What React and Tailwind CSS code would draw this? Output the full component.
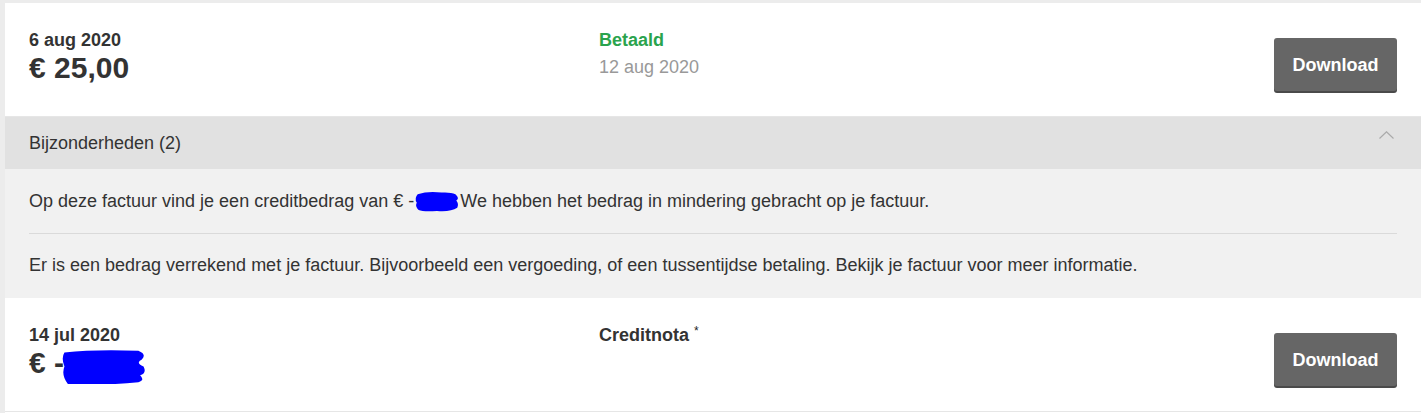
import React from "react";

const font = { fontFamily: '"Liberation Sans", Arial, sans-serif' };

function Scribble({ className, d }) {
  return (
    <svg className={className} viewBox="0 0 100 40" preserveAspectRatio="none">
      <path d={d} fill="#0000ff" />
    </svg>
  );
}

function DownloadButton() {
  return (
    <button className="mt-[8px] h-[53px] w-[123px] rounded-[3px] bg-[#666666] text-[18px] font-bold text-white shadow-[0_2px_0_#4a4a4a]">
      <span className="relative top-[1px]">Download</span>
    </button>
  );
}

function InvoiceRow({ date, amount, middle }) {
  return (
    <div className="grid grid-cols-[570px_1fr_auto] items-start border-b border-[#e6e6e6] bg-white px-6 pt-[27px] pb-[25px]">
      <div>
        <div className="text-[18px] leading-5 font-bold text-[#333]">{date}</div>
        <div className="mt-[3px] text-[30px] leading-[30px] font-bold text-[#333]">{amount}</div>
      </div>
      <div>{middle}</div>
      <DownloadButton />
    </div>
  );
}

export default function App() {
  return (
    <div className="min-h-[413px] bg-[#ececec] pl-[5px] pt-[3px]" style={font}>
      <div className="bg-white">
        <InvoiceRow
          date="6 aug 2020"
          amount="€ 25,00"
          middle={
            <div>
              <div className="text-[18px] leading-5 font-bold text-[#2aa34d]">Betaald</div>
              <div className="mt-[7px] text-[18px] leading-5 text-[#999]">12 aug 2020</div>
            </div>
          }
        />

        <div className="flex h-[52px] items-center justify-between bg-[#e1e1e1] px-6">
          <span className="text-[18px] text-[#333]">Bijzonderheden (2)</span>
          <svg className="mb-4 mr-[3px] h-[8px] w-[15px]" viewBox="0 0 15 8" fill="none">
            <path d="M0.5 7.5 L7.5 0.8 L14.5 7.5" stroke="#aaaaaa" strokeWidth="1.2" />
          </svg>
        </div>

        <div className="bg-[#f1f1f1] px-6">
          <div className="py-5 text-[18px] leading-6 text-[#333]">
            {"Op deze factuur vind je een creditbedrag van € -"}
            <span className="relative inline-block w-[46px]">
              <Scribble
                className="absolute left-0 -top-[16px] h-[21px] w-[46px]"
                d="M8 6 Q30 0 60 3 Q80 2 90 6 Q100 14 92 18 Q98 24 94 32 Q80 40 50 38 Q20 40 10 36 Q2 30 6 22 Q0 14 8 6 Z"
              />
            </span>
            We hebben het bedrag in mindering gebracht op je factuur.
          </div>
          <div className="h-px bg-[#dadada]" />
          <div className="pt-[19px] pb-[21px] text-[18px] leading-6 text-[#333]">
            Er is een bedrag verrekend met je factuur. Bijvoorbeeld een vergoeding, of een tussentijdse betaling. Bekijk je factuur voor meer informatie.
          </div>
        </div>

        <InvoiceRow
          date="14 jul 2020"
          amount={
            <span className="flex items-start">
              € -
              <Scribble
                className="ml-[-3px] mt-[1px] h-[35px] w-[86px]"
                d="M4 4 Q40 0 90 2 Q100 6 94 12 Q86 16 96 20 Q100 28 92 30 Q98 36 90 38 Q50 42 8 40 Q0 30 4 20 Q0 10 4 4 Z"
              />
            </span>
          }
          middle={
            <div className="text-[18px] leading-5 font-bold text-[#333]">
              Creditnota<sup className="ml-[5px] text-[12px] font-normal text-[#222]">*</sup>
            </div>
          }
        />
        <div className="h-[10px] bg-white" />
      </div>
    </div>
  );
}
